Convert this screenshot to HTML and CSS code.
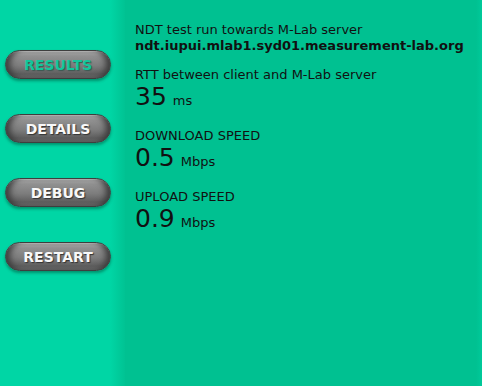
FILE: index.html
```html
<!DOCTYPE html>
<html lang="en">
<head>
  <meta charset="UTF-8" />
  <title>NDT - Results</title>
  <link rel="stylesheet" href="styles.css">
</head>
<body>
  <div class="app">
    <div class="sidebar">
      <button class="pill active">RESULTS</button>
      <button class="pill">DETAILS</button>
      <button class="pill">DEBUG</button>
      <button class="pill">RESTART</button>
    </div>

    <div class="main">
      <div class="block first">
        <div class="label">NDT test run towards M-Lab server</div>
        <div class="server">ndt.iupui.mlab1.syd01.measurement-lab.org</div>
      </div>
      <div class="block">
        <div class="label">RTT between client and M-Lab server</div>
        <div class="value">35<span class="unit">ms</span></div>
      </div>
      <div class="block">
        <div class="label">DOWNLOAD SPEED</div>
        <div class="value">0.5<span class="unit">Mbps</span></div>
      </div>
      <div class="block">
        <div class="label">UPLOAD SPEED</div>
        <div class="value">0.9<span class="unit">Mbps</span></div>
      </div>
    </div>
  </div>
</body>
</html>
```

FILE: styles.css
```css
body {
  margin: 0;
  font-family: 'DejaVu Sans', Verdana, sans-serif;
  color: #111;
  background-color: #00c191;
}

.app {
  display: flex;
  height: 386px;
  background: linear-gradient(to right, #00d6a5 0, #00d6a5 110px, #00c393 125px, #00c191 125px, #00c191 476px, #00c99a 482px);
}

.sidebar {
  width: 125px;
  flex-shrink: 0;
  display: flex;
  flex-direction: column;
  align-items: flex-start;
  gap: 35px;
  padding: 50px 0 0 5px;
  box-sizing: border-box;
}

.pill {
  width: 106px;
  height: 29px;
  border: 1px solid #3e3e3e;
  border-radius: 15px;
  background: linear-gradient(to bottom, #b0b0b0 0%, #909090 20%, #7c7c7c 55%, #5e5e5e 85%, #6a6a6a 100%);
  box-shadow: inset 7px 0 6px -3px #3c3c3c, inset -7px 0 6px -3px #3c3c3c, inset 0 2px 1px -1px #d8d8d8, 0 2px 3px rgba(0, 60, 40, 0.45);
  color: #f8f8f8;
  font-family: 'DejaVu Sans', Verdana, sans-serif;
  font-weight: bold;
  font-size: 14px;
  text-shadow: 1px 1px 1px #333;
  padding: 0;
  cursor: pointer;
}

.pill.active {
  color: #13c69c;
  text-shadow: 1px 1px 1px #3a5a52;
}

.main {
  flex: 1;
  padding: 22px 0 0 10px;
}

.block {
  margin-bottom: 17px;
}

.block.first {
  margin-bottom: 13px;
}

.label {
  font-size: 13px;
  line-height: 16px;
}

.server {
  font-size: 13px;
  line-height: 16px;
  font-weight: bold;
}

.value {
  font-size: 25px;
  line-height: 28px;
}

.unit {
  font-size: 13px;
  line-height: 1;
  margin-left: 6px;
}
```
